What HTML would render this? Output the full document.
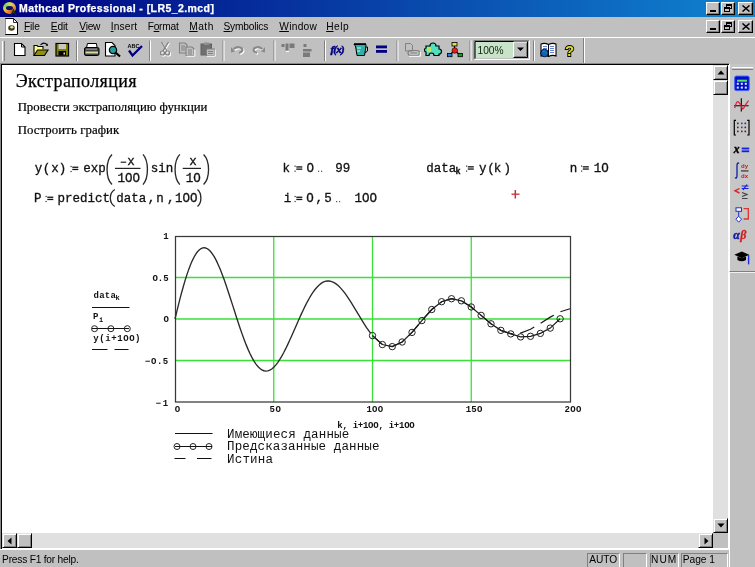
<!DOCTYPE html>
<html><head><meta charset="utf-8">
<style>
*{margin:0;padding:0;box-sizing:border-box}
html,body{width:755px;height:567px;overflow:hidden;background:#c0c0c0;font-family:"Liberation Sans",sans-serif}
.a{position:absolute}
svg.a{will-change:transform}
#title{left:0;top:0;width:755px;height:17px;background:linear-gradient(to right,#000080,#1084d0)}
#title .t{left:20px;top:1px;color:#fff;font-weight:bold;font-size:11px;line-height:14px;white-space:nowrap}
.btn{width:14px;height:13px;background:#c0c0c0;border-top:1px solid #fff;border-left:1px solid #fff;border-right:1px solid #000;border-bottom:1px solid #000;box-shadow:inset -1px -1px 0 #808080}
#menu{left:0;top:17px;width:755px;height:21px;background:#c0c0c0;border-bottom:1px solid #fff}
.mi{top:3px;font-size:11px;line-height:13px;color:#000;white-space:nowrap}
.mi u{text-decoration:none;border-bottom:1px solid #000}
#tb{left:0;top:38px;width:755px;height:26px;background:#c0c0c0}
.sep{top:3px;width:2px;height:21px;border-left:1px solid #808080;border-right:1px solid #fff}
#doc{left:0;top:63px;width:729px;height:486px;background:#fff;border-top:1px solid #8a8a8a;border-left:1px solid #8a8a8a;box-shadow:inset 1px 1px 0 #000}
.serif{font-family:"Liberation Serif",serif;color:#000;white-space:nowrap}
.m{font-family:"Liberation Mono",monospace;font-size:12.6px;color:#000;white-space:nowrap;line-height:14px}
.s{font-family:"Liberation Sans",sans-serif}
.pl{font-family:"Liberation Mono",monospace;font-weight:bold;font-size:8.8px;color:#000;white-space:nowrap;line-height:10px}
.lg{font-family:"Liberation Mono",monospace;font-size:12.4px;color:#000;white-space:nowrap;line-height:12px}
#vs{left:713px;top:65px;width:15px;height:468px;background:#e0e0e0}
#hs{left:2px;top:533px;width:711px;height:15px;background:#e0e0e0}
.sb{width:15px;height:15px;background:#c0c0c0;border-top:1px solid #e0e0e0;border-left:1px solid #e0e0e0;border-right:1px solid #000;border-bottom:1px solid #000;box-shadow:inset 1px 1px 0 #fff,inset -1px -1px 0 #808080}
#rt{left:729px;top:64px;width:26px;height:208px;background:#c6c6c6;border-left:1px solid #fff;border-bottom:1px solid #808080;box-shadow:0 1px 0 #f0f0f0}
#status{left:0;top:549px;width:729px;height:18px;background:#c0c0c0;border-top:1px solid #fff}
#rcol{left:729px;top:64px;width:26px;height:503px;background:#c0c0c0;border-left:1px solid #fff}
.pn{top:3px;height:15px;border-top:1px solid #808080;border-left:1px solid #808080;border-right:1px solid #fff;font-size:11px;line-height:13px;padding-left:2px;white-space:nowrap}
</style></head><body>
<!-- title bar -->
<div id="title" class="a">
  <div class="a" style="left:3px;top:2px;width:13px;height:12px;border-radius:50%;background:conic-gradient(from 200deg,#f08030,#e0d040,#80d060,#c0e060,#f0c040,#e08030,#d06030,#f08030)"></div>
  <div class="a" style="left:6px;top:5.5px;width:7px;height:4.5px;border-radius:50%;background:#10106a"></div>
  <svg class="a" style="left:0;top:0" width="20" height="17"><path d="M11,15.5 L13.5,10 L16,15.5" stroke="#103010" stroke-width="1.3" fill="none"/></svg>
  <div class="a btn" style="left:706px;top:2px"><div class="a" style="left:3px;top:7px;width:6px;height:2px;background:#000"></div></div>
  <div class="a btn" style="left:721px;top:2px">
    <div class="a" style="left:4px;top:1px;width:6px;height:5px;border:1px solid #000;border-top-width:2px"></div>
    <div class="a" style="left:2px;top:4px;width:6px;height:5px;border:1px solid #000;border-top-width:2px;background:#c0c0c0"></div>
  </div>
  <div class="a btn" style="left:738px;top:2px;width:15px"><svg class="a" style="left:3px;top:2px" width="8" height="7" viewBox="0 0 8 7"><path d="M0.5,0.5 L7.5,6.5 M7.5,0.5 L0.5,6.5" stroke="#000" stroke-width="1.5"/></svg></div>
</div>
<!-- menu bar -->
<div id="menu" class="a">
  <svg class="a" style="left:4px;top:1px" width="14" height="17" viewBox="0 0 14 17">
    <path d="M1.5,0.5 H9.5 L13.5,4.5 V16.5 H1.5 Z" fill="#fff" stroke="#000"/>
    <path d="M1.5,1 V16" stroke="#909090"/>
    <path d="M9.5,0.5 V4.5 H13.5" fill="none" stroke="#000" stroke-width="0.8"/>
    <ellipse cx="7.5" cy="10" rx="3.3" ry="2.8" fill="#403818"/>
    <ellipse cx="7.8" cy="9.3" rx="1.6" ry="1.2" fill="#e8e0a0"/>
  </svg>
  <div class="a btn" style="left:706px;top:3px"><div class="a" style="left:3px;top:7px;width:6px;height:2px;background:#000"></div></div>
  <div class="a btn" style="left:721px;top:3px">
    <div class="a" style="left:4px;top:1px;width:6px;height:5px;border:1px solid #000;border-top-width:2px"></div>
    <div class="a" style="left:2px;top:4px;width:6px;height:5px;border:1px solid #000;border-top-width:2px;background:#c0c0c0"></div>
  </div>
  <div class="a btn" style="left:738px;top:3px;width:15px"><svg class="a" style="left:3px;top:2px" width="8" height="7" viewBox="0 0 8 7"><path d="M0.5,0.5 L7.5,6.5 M7.5,0.5 L0.5,6.5" stroke="#000" stroke-width="1.5"/></svg></div>
</div>
<!-- toolbar -->
<div id="tb" class="a">
  <div class="a" style="left:2px;top:3px;width:3px;height:20px;border-left:1px solid #fff;border-right:1px solid #808080"></div>
  <div class="a" style="left:583px;top:0px;width:2px;height:26px;border-left:1px solid #808080;border-right:1px solid #fff"></div>
</div>
<!-- toolbar icons -->
<svg class="a" style="left:0;top:0" width="755" height="567" viewBox="0 0 755 567">
<!-- new -->
<path d="M14.5,43.5 H21.5 L25,47 V55.5 H14.5 Z" fill="#fff" stroke="#000" stroke-width="1.1"/>
<path d="M21.5,43.5 V47 H25" fill="none" stroke="#000" stroke-width="1"/>
<!-- open -->
<path d="M34,55.5 V45.5 H37 L38,46.5 H43 V49" fill="#ffff90" stroke="#000" stroke-width="1.1"/>
<path d="M34,55.5 L37.5,50 H48 L44.5,55.5 Z" fill="#909010" stroke="#000" stroke-width="1.1"/>
<path d="M40.5,45 Q43.5,41.5 47,44.5" fill="none" stroke="#000" stroke-width="1.1"/>
<path d="M45.5,45.5 L48,46 L47.5,43.5 Z" fill="#000"/>
<!-- save -->
<rect x="56" y="43.5" width="12.5" height="12.5" fill="#808000" stroke="#000" stroke-width="1.2"/>
<rect x="58.5" y="44" width="7.5" height="5" fill="#c8c8c0"/>
<rect x="58.5" y="51" width="7.5" height="4.5" fill="#000"/>
<rect x="63.5" y="52.5" width="1.5" height="2" fill="#e0e0c0"/>
<!-- printer -->
<path d="M87.5,43.5 H96.5 L97,47.5 H86.5 Z" fill="#fff" stroke="#000" stroke-width="1"/>
<rect x="84.5" y="47.5" width="14.5" height="8" rx="1.5" fill="#404040" stroke="#000" stroke-width="1"/>
<rect x="85.5" y="51.5" width="12.5" height="2" fill="#d8d8a0"/>
<rect x="86" y="48.5" width="11" height="1.5" fill="#808080"/>
<!-- preview -->
<path d="M105.5,42.5 H112 L115,45.5 V56 H105.5 Z" fill="#fff" stroke="#000" stroke-width="1.1"/>
<circle cx="113" cy="50" r="3.6" fill="#20a0a0" stroke="#000" stroke-width="1.3"/>
<path d="M115.5,52.5 L120,56.5" stroke="#000" stroke-width="2.2"/>
<!-- spell -->
<text x="127.5" y="48" font-family="'Liberation Sans',sans-serif" font-weight="bold" font-size="5.5" fill="#000">ABC</text>
<path d="M129,50.5 L132.5,55.5 L142,46" fill="none" stroke="#000080" stroke-width="2.3"/>
<!-- cut (disabled) -->
<g stroke="#fff" stroke-width="1.2" fill="none" transform="translate(1,1)">
<path d="M161.5,42 L167,51 M168.5,42 L163,51"/><circle cx="162.5" cy="53" r="2"/><circle cx="167.5" cy="53" r="2"/></g>
<g stroke="#808080" stroke-width="1.2" fill="none">
<path d="M161.5,42 L167,51 M168.5,42 L163,51"/><circle cx="162.5" cy="53" r="2"/><circle cx="167.5" cy="53" r="2"/></g>
<!-- copy (disabled) -->
<g fill="#c0c0c0" stroke="#808080" stroke-width="1.1">
<path d="M179.5,43 H185 L187,45 V53 H179.5 Z" /><path d="M186,47 H192 L194,49 V55.5 H186 Z"/></g>
<g stroke="#808080" stroke-width="1"><path d="M181,46 H185 M181,48 H185 M181,50 H185 M188,50 H192 M188,52 H192 M188,54 H192"/></g>
<path d="M194.8,49.5 V56.2 H186.5" fill="none" stroke="#fff" stroke-width="1"/>
<!-- paste (disabled) -->
<rect x="201" y="44" width="10.5" height="11" fill="#707070" stroke="#606060"/>
<rect x="204" y="42.5" width="5" height="2.5" fill="#909090"/>
<rect x="206.5" y="49" width="8" height="6.5" fill="#c0c0c0" stroke="#808080"/>
<path d="M208,51.5 H213 M208,53.5 H213" stroke="#808080"/>
<path d="M215.2,49.5 V56.2 H207" fill="none" stroke="#fff" stroke-width="1"/>
<!-- undo/redo (disabled) -->
<g fill="none" stroke-width="2.2">
<path d="M233.5,49 Q238,45.5 242,48.5 Q243.5,51.5 239,53" stroke="#fff" transform="translate(1,1)"/>
<path d="M233.5,49 Q238,45.5 242,48.5 Q243.5,51.5 239,53" stroke="#8a8a8a"/>
<path d="M262.5,49 Q258,45.5 254,48.5 Q252.5,51.5 257,53" stroke="#fff" transform="translate(1,1)"/>
<path d="M262.5,49 Q258,45.5 254,48.5 Q252.5,51.5 257,53" stroke="#8a8a8a"/>
</g>
<path d="M231,47 L235,51.5 L231,52.5 Z" fill="#8a8a8a"/>
<path d="M265,47 L261,51.5 L265,52.5 Z" fill="#8a8a8a"/>
<!-- align across -->
<g fill="#7a7a7a"><rect x="281.5" y="44" width="3" height="3"/><rect x="285.5" y="43.5" width="3" height="7"/><rect x="289.5" y="43.5" width="5" height="4.5"/></g>
<path d="M286,51.5 H289" stroke="#fff"/>
<!-- align down -->
<g fill="#7a7a7a"><rect x="303.5" y="44" width="3" height="3"/><rect x="303" y="49" width="8.5" height="2.5"/><rect x="303" y="52.5" width="7" height="4.5"/></g>
<!-- f(x) -->
<text x="330.5" y="52.5" font-family="'Liberation Serif',serif" font-style="italic" font-weight="bold" font-size="11" fill="#000080" stroke="#000080" stroke-width="0.5" letter-spacing="-0.8">f(x)</text>
<!-- cup -->
<path d="M354,44.5 H366 V46 L364.5,55.5 H357 L355.5,46 Z" fill="#30b0a8" stroke="#000" stroke-width="1"/>
<path d="M354,44 H366" stroke="#000" stroke-width="1.6"/>
<path d="M365.5,47 H367.5 V51 L364.8,53" fill="none" stroke="#000" stroke-width="1"/>
<path d="M357,48 H361 M357,51 H360" stroke="#c0fff0" stroke-width="1"/>
<!-- equals -->
<rect x="376" y="45.5" width="11" height="2.8" fill="#000080"/>
<rect x="376" y="50" width="11" height="2.8" fill="#000080"/>
<!-- insert component (disabled) -->
<path d="M405.5,43.5 H410.5 L412.5,45.5 V51 H405.5 Z" fill="none" stroke="#808080"/>
<rect x="408" y="50.5" width="11.5" height="5" rx="2.5" fill="none" stroke="#808080" stroke-width="1.2"/>
<path d="M410.5,53 H417" stroke="#808080"/>
<path d="M420.3,52 V56.3 H409" fill="none" stroke="#fff"/>
<!-- puzzle -->
<path d="M426,46 H430 Q430,43 433,43 Q436,43 436,46 H439 V49 Q441.5,49 441.5,51.5 Q441.5,54 439,54 V55.5 H434 Q434,53 431.5,53 Q429,53 429,55.5 H426 V52 Q424.5,52 424.5,50 Q424.5,48 426,48 Z" fill="#50e0c0" stroke="#000" stroke-width="1.2"/>
<path d="M427,47 H431 V52 H427 Z" fill="#c0e060"/>
<!-- network -->
<path d="M454.5,45 V50.5 L449.5,55 M454.5,50.5 L460,55" fill="none" stroke="#000" stroke-width="1.1"/>
<rect x="452" y="42.5" width="5" height="3.5" fill="#e0e040" stroke="#000" stroke-width="0.8"/>
<circle cx="454.8" cy="50.5" r="2.8" fill="#e02020" stroke="#000" stroke-width="0.6"/>
<rect x="447.5" y="53.5" width="4.5" height="3.2" fill="#2080e0" stroke="#000" stroke-width="0.8"/>
<rect x="458" y="53.5" width="4.5" height="3.2" fill="#10a020" stroke="#000" stroke-width="0.8"/>
<!-- combo -->
<rect x="474" y="40.5" width="55" height="19" fill="#c0c0c0"/>
<path d="M474,59.5 V40.5 H529" fill="none" stroke="#808080"/>
<path d="M475,58.5 V41.5 H528" fill="none" stroke="#000"/>
<path d="M474.5,59.5 H529.5 V40.5" fill="none" stroke="#fff"/>
<rect x="476" y="42" width="37" height="16" fill="#c8e4c8"/>
<text x="477.5" y="54" font-family="'Liberation Sans',sans-serif" font-size="10.2" fill="#102010">100%</text>
<rect x="513.5" y="42" width="14" height="15.5" fill="#c0c0c0"/>
<path d="M513.5,57.5 V42 H527.5" fill="none" stroke="#fff"/>
<path d="M513.5,57.5 H527.5 V42" fill="none" stroke="#000"/>
<path d="M514.5,56.5 H526.5 V43" fill="none" stroke="#808080"/>
<path d="M517,47.5 H524 L520.5,51 Z" fill="#000"/>
<!-- book -->
<path d="M541,44 Q544.5,42.5 548.5,44.5 Q552.5,42.5 556,44 V56 Q552.5,54.5 548.5,56.5 Q544.5,54.5 541,56 Z" fill="#fff" stroke="#000" stroke-width="1.1"/>
<path d="M548.5,44.5 V56.5" stroke="#000"/>
<path d="M543,46.5 H547 M543,48.5 H547 M550,46.5 H554 M550,48.5 H554 M550,50.5 H554 M550,52.5 H554" stroke="#4060c0" stroke-width="0.8"/>
<circle cx="544.5" cy="53" r="3.8" fill="#1060c0" stroke="#000" stroke-width="0.8"/>
<path d="M542,51.5 Q544,50 545,52 Q546,54.5 547.5,53" fill="#20a040"/>
<!-- help -->
<text x="565" y="56" font-family="'Liberation Sans',sans-serif" font-weight="bold" font-size="15" fill="#e0e020" stroke="#000" stroke-width="1.8" paint-order="stroke">?</text>
<!-- seps -->
<path d="M76.5,40.5 V61" stroke="#808080" stroke-width="1"/><path d="M77.5,40.5 V61" stroke="#fff" stroke-width="1"/>
<path d="M149.5,40.5 V61" stroke="#808080" stroke-width="1"/><path d="M150.5,40.5 V61" stroke="#fff" stroke-width="1"/>
<path d="M223.0,40.5 V61" stroke="#808080" stroke-width="1"/><path d="M224.0,40.5 V61" stroke="#fff" stroke-width="1"/>
<path d="M274.0,40.5 V61" stroke="#808080" stroke-width="1"/><path d="M275.0,40.5 V61" stroke="#fff" stroke-width="1"/>
<path d="M324.5,40.5 V61" stroke="#808080" stroke-width="1"/><path d="M325.5,40.5 V61" stroke="#fff" stroke-width="1"/>
<path d="M397.0,40.5 V61" stroke="#808080" stroke-width="1"/><path d="M398.0,40.5 V61" stroke="#fff" stroke-width="1"/>
<path d="M470.0,40.5 V61" stroke="#808080" stroke-width="1"/><path d="M471.0,40.5 V61" stroke="#fff" stroke-width="1"/>
<path d="M533.5,40.5 V61" stroke="#808080" stroke-width="1"/><path d="M534.5,40.5 V61" stroke="#fff" stroke-width="1"/>


</svg>
<!-- document -->
<div id="doc" class="a">
</div>
<!-- math -->
<svg class="a" style="left:0;top:0" width="755" height="567">
<text x="34.70" y="172.20" font-family='"Liberation Mono",monospace' font-weight="normal" font-size="12.5" fill="#111" stroke="#111" stroke-width="0.3" xml:space="preserve">y</text>
<text x="42.71" y="172.20" font-family='"Liberation Mono",monospace' font-weight="normal" font-size="12.5" fill="#111" stroke="#111" stroke-width="0.3" xml:space="preserve">(</text>
<text x="51.13" y="172.20" font-family='"Liberation Mono",monospace' font-weight="normal" font-size="12.5" fill="#111" stroke="#111" stroke-width="0.3" xml:space="preserve">x</text>
<text x="58.65" y="172.20" font-family='"Liberation Mono",monospace' font-weight="normal" font-size="12.5" fill="#111" stroke="#111" stroke-width="0.3" xml:space="preserve">)</text>
<rect x="70.50" y="165.90" width="1.2" height="1.2" fill="#333"/>
<rect x="70.50" y="170.90" width="1.2" height="1.2" fill="#333"/>
<rect x="72.30" y="166.60" width="6" height="1.3" fill="#111"/>
<rect x="72.30" y="168.80" width="6" height="1.3" fill="#111"/>
<text x="83.19" y="172.20" font-family='"Liberation Mono",monospace' font-weight="normal" font-size="12.5" fill="#111" stroke="#111" stroke-width="0.3" xml:space="preserve">exp</text>
<path d="M112.00,154.40 C105.40,161.04 105.40,177.96 112.00,184.60" fill="none" stroke="#2a2a2a" stroke-width="1.35"/>
<rect x="120.7" y="161.6" width="5.5" height="1.2" fill="#222"/>
<text x="127.23" y="164.70" font-family='"Liberation Mono",monospace' font-weight="normal" font-size="12.5" fill="#111" stroke="#111" stroke-width="0.3" xml:space="preserve">x</text>
<rect x="115.00" y="167.80" width="25.50" height="1.2" fill="#222"/>
<text x="117.40" y="181.70" font-family='"Liberation Mono",monospace' font-weight="normal" font-size="12.5" fill="#111" stroke="#111" stroke-width="0.3" xml:space="preserve">1OO</text>
<path d="M143.00,154.40 C148.90,161.04 148.90,177.96 143.00,184.60" fill="none" stroke="#2a2a2a" stroke-width="1.35"/>
<text x="150.68" y="172.20" font-family='"Liberation Mono",monospace' font-weight="normal" font-size="12.5" fill="#111" stroke="#111" stroke-width="0.3" xml:space="preserve">sin</text>
<path d="M179.80,154.40 C173.50,161.04 173.50,177.96 179.80,184.60" fill="none" stroke="#2a2a2a" stroke-width="1.35"/>
<text x="189.23" y="164.70" font-family='"Liberation Mono",monospace' font-weight="normal" font-size="12.5" fill="#111" stroke="#111" stroke-width="0.3" xml:space="preserve">x</text>
<rect x="182.70" y="167.80" width="18.30" height="1.2" fill="#222"/>
<text x="185.70" y="181.70" font-family='"Liberation Mono",monospace' font-weight="normal" font-size="12.5" fill="#111" stroke="#111" stroke-width="0.3" xml:space="preserve">1O</text>
<path d="M203.60,154.40 C210.20,161.04 210.20,177.96 203.60,184.60" fill="none" stroke="#2a2a2a" stroke-width="1.35"/>
<text x="34.01" y="202.20" font-family='"Liberation Mono",monospace' font-weight="normal" font-size="12.5" fill="#111" stroke="#111" stroke-width="0.3" xml:space="preserve">P</text>
<rect x="45.50" y="195.90" width="1.2" height="1.2" fill="#333"/>
<rect x="45.50" y="200.90" width="1.2" height="1.2" fill="#333"/>
<rect x="47.30" y="196.60" width="6" height="1.3" fill="#111"/>
<rect x="47.30" y="198.80" width="6" height="1.3" fill="#111"/>
<text x="57.41" y="202.20" font-family='"Liberation Mono",monospace' font-weight="normal" font-size="12.5" fill="#111" stroke="#111" stroke-width="0.3" xml:space="preserve">predict</text>
<path d="M114.80,189.50 C108.80,193.24 108.80,202.76 114.80,206.50" fill="none" stroke="#2a2a2a" stroke-width="1.35"/>
<text x="116.16" y="202.20" font-family='"Liberation Mono",monospace' font-weight="normal" font-size="12.5" fill="#111" stroke="#111" stroke-width="0.3" xml:space="preserve">data</text>
<text x="147.82" y="202.20" font-family='"Liberation Mono",monospace' font-weight="normal" font-size="12.5" fill="#111" stroke="#111" stroke-width="0.3" xml:space="preserve">,</text>
<text x="156.21" y="202.20" font-family='"Liberation Mono",monospace' font-weight="normal" font-size="12.5" fill="#111" stroke="#111" stroke-width="0.3" xml:space="preserve">n</text>
<text x="167.02" y="202.20" font-family='"Liberation Mono",monospace' font-weight="normal" font-size="12.5" fill="#111" stroke="#111" stroke-width="0.3" xml:space="preserve">,</text>
<text x="175.00" y="202.20" font-family='"Liberation Mono",monospace' font-weight="normal" font-size="12.5" fill="#111" stroke="#111" stroke-width="0.3" xml:space="preserve">1OO</text>
<path d="M197.50,189.50 C202.00,193.24 202.00,202.76 197.50,206.50" fill="none" stroke="#2a2a2a" stroke-width="1.35"/>
<text x="282.56" y="171.90" font-family='"Liberation Mono",monospace' font-weight="normal" font-size="12.5" fill="#111" stroke="#111" stroke-width="0.3" xml:space="preserve">k</text>
<rect x="294.50" y="165.60" width="1.2" height="1.2" fill="#333"/>
<rect x="294.50" y="170.60" width="1.2" height="1.2" fill="#333"/>
<rect x="296.30" y="166.30" width="6" height="1.3" fill="#111"/>
<rect x="296.30" y="168.50" width="6" height="1.3" fill="#111"/>
<text x="306.38" y="171.90" font-family='"Liberation Mono",monospace' font-weight="normal" font-size="12.5" fill="#111" stroke="#111" stroke-width="0.3" xml:space="preserve">O</text>
<rect x="318.00" y="170.70" width="1.2" height="1.2" fill="#555"/>
<rect x="321.00" y="170.70" width="1.2" height="1.2" fill="#555"/>
<text x="335.34" y="171.90" font-family='"Liberation Mono",monospace' font-weight="normal" font-size="12.5" fill="#111" stroke="#111" stroke-width="0.3" xml:space="preserve">99</text>
<text x="283.63" y="202.20" font-family='"Liberation Mono",monospace' font-weight="normal" font-size="12.5" fill="#111" stroke="#111" stroke-width="0.3" xml:space="preserve">i</text>
<rect x="294.50" y="195.90" width="1.2" height="1.2" fill="#333"/>
<rect x="294.50" y="200.90" width="1.2" height="1.2" fill="#333"/>
<rect x="296.30" y="196.60" width="6" height="1.3" fill="#111"/>
<rect x="296.30" y="198.80" width="6" height="1.3" fill="#111"/>
<text x="306.18" y="202.20" font-family='"Liberation Mono",monospace' font-weight="normal" font-size="12.5" fill="#111" stroke="#111" stroke-width="0.3" xml:space="preserve">O</text>
<text x="315.42" y="202.20" font-family='"Liberation Mono",monospace' font-weight="normal" font-size="12.5" fill="#111" stroke="#111" stroke-width="0.3" xml:space="preserve">,</text>
<text x="324.22" y="202.20" font-family='"Liberation Mono",monospace' font-weight="normal" font-size="12.5" fill="#111" stroke="#111" stroke-width="0.3" xml:space="preserve">5</text>
<rect x="336.00" y="201.00" width="1.2" height="1.2" fill="#555"/>
<rect x="339.00" y="201.00" width="1.2" height="1.2" fill="#555"/>
<text x="354.40" y="202.20" font-family='"Liberation Mono",monospace' font-weight="normal" font-size="12.5" fill="#111" stroke="#111" stroke-width="0.3" xml:space="preserve">1OO</text>
<text x="426.16" y="171.80" font-family='"Liberation Mono",monospace' font-weight="normal" font-size="12.5" fill="#111" stroke="#111" stroke-width="0.3" xml:space="preserve">data</text>
<text x="455.58" y="174.10" font-family='"Liberation Mono",monospace' font-weight="bold" font-size="8.5" fill="#111" stroke="#111" stroke-width="0.3" xml:space="preserve">k</text>
<rect x="466.00" y="165.50" width="1.2" height="1.2" fill="#333"/>
<rect x="466.00" y="170.50" width="1.2" height="1.2" fill="#333"/>
<rect x="467.80" y="166.20" width="6" height="1.3" fill="#111"/>
<rect x="467.80" y="168.40" width="6" height="1.3" fill="#111"/>
<text x="479.00" y="171.80" font-family='"Liberation Mono",monospace' font-weight="normal" font-size="12.5" fill="#111" stroke="#111" stroke-width="0.3" xml:space="preserve">y</text>
<text x="487.31" y="171.80" font-family='"Liberation Mono",monospace' font-weight="normal" font-size="12.5" fill="#111" stroke="#111" stroke-width="0.3" xml:space="preserve">(</text>
<text x="493.86" y="171.80" font-family='"Liberation Mono",monospace' font-weight="normal" font-size="12.5" fill="#111" stroke="#111" stroke-width="0.3" xml:space="preserve">k</text>
<text x="503.55" y="171.80" font-family='"Liberation Mono",monospace' font-weight="normal" font-size="12.5" fill="#111" stroke="#111" stroke-width="0.3" xml:space="preserve">)</text>
<text x="569.71" y="171.80" font-family='"Liberation Mono",monospace' font-weight="normal" font-size="12.5" fill="#111" stroke="#111" stroke-width="0.3" xml:space="preserve">n</text>
<rect x="581.00" y="165.50" width="1.2" height="1.2" fill="#333"/>
<rect x="581.00" y="170.50" width="1.2" height="1.2" fill="#333"/>
<rect x="582.80" y="166.20" width="6" height="1.3" fill="#111"/>
<rect x="582.80" y="168.40" width="6" height="1.3" fill="#111"/>
<text x="593.80" y="171.80" font-family='"Liberation Mono",monospace' font-weight="normal" font-size="12.5" fill="#111" stroke="#111" stroke-width="0.3" xml:space="preserve">1O</text>
</svg>
<svg class="a" style="left:0;top:0" width="755" height="567"><path d="M511.5,194.2 H519.5" stroke="#d84848" stroke-width="1.5"/><path d="M515.3,190 V198.5" stroke="#b83848" stroke-width="1.5"/></svg>
<!-- plot -->
<svg class="a" style="left:0;top:0" width="755" height="567" viewBox="0 0 755 567">
  <g stroke="#38e038" stroke-width="1.3" fill="none">
    <line x1="175" y1="277.5" x2="570" y2="277.5"/>
    <line x1="175" y1="319" x2="570" y2="319"/>
    <line x1="175" y1="360.5" x2="570" y2="360.5"/>
    <line x1="273.75" y1="236" x2="273.75" y2="402"/>
    <line x1="372.5" y1="236" x2="372.5" y2="402"/>
    <line x1="471.25" y1="236" x2="471.25" y2="402"/>
  </g>
  <rect x="175.5" y="236.5" width="395" height="165.5" fill="none" stroke="#383838" stroke-width="1.25"/>
  <polyline points="175.00,319.00 176.97,310.80 178.95,302.84 180.93,295.20 182.90,287.95 184.88,281.15 186.85,274.86 188.82,269.14 190.80,264.04 192.78,259.58 194.75,255.80 196.72,252.73 198.70,250.39 200.68,248.77 202.65,247.89 204.62,247.74 206.60,248.30 208.57,249.56 210.55,251.49 212.53,254.05 214.50,257.21 216.47,260.92 218.45,265.15 220.43,269.82 222.40,274.90 224.38,280.31 226.35,286.01 228.32,291.92 230.30,297.99 232.28,304.14 234.25,310.32 236.22,316.47 238.20,322.52 240.18,328.41 242.15,334.10 244.12,339.52 246.10,344.63 248.07,349.38 250.05,353.73 252.03,357.65 254.00,361.11 255.97,364.07 257.95,366.53 259.93,368.47 261.90,369.87 263.88,370.73 265.85,371.07 267.82,370.87 269.80,370.16 271.77,368.96 273.75,367.27 275.73,365.14 277.70,362.59 279.68,359.66 281.65,356.38 283.62,352.79 285.60,348.93 287.57,344.85 289.55,340.59 291.52,336.20 293.50,331.73 295.48,327.22 297.45,322.71 299.43,318.26 301.40,313.90 303.38,309.68 305.35,305.64 307.32,301.81 309.30,298.22 311.27,294.92 313.25,291.92 315.23,289.25 317.20,286.94 319.18,284.98 321.15,283.41 323.12,282.22 325.10,281.43 327.07,281.02 329.05,281.01 331.02,281.37 333.00,282.10 334.98,283.19 336.95,284.61 338.93,286.35 340.90,288.38 342.88,290.67 344.85,293.21 346.82,295.95 348.80,298.86 350.77,301.92 352.75,305.09 354.73,308.34 356.70,311.63 358.68,314.92 360.65,318.20 362.62,321.41 364.60,324.54 366.57,327.55 368.55,330.42 370.52,333.11" fill="none" stroke="#2a2a2a" stroke-width="1.35"/>
  <polyline points="372.50,335.61 382.38,344.55 392.25,346.63 402.12,342.01 412.00,332.41 421.88,320.58 431.75,309.50 441.62,301.71 451.50,298.72 461.38,300.80 471.25,306.96 481.12,315.36 491.00,323.82 500.88,330.35 510.75,333.58 520.62,333.07 530.50,329.30 540.38,323.47 550.25,317.14 560.12,311.85 570.00,308.75" fill="none" stroke="#1a1a1a" stroke-width="1.2" stroke-dasharray="15.5 7.4" stroke-dashoffset="2.7"/>
  <polyline points="372.50,335.61 382.38,344.55 392.25,346.63 402.12,342.01 412.00,332.41 421.88,320.58 431.75,309.50 441.62,301.71 451.50,298.72 461.38,300.80 471.25,306.96 481.12,315.36 491.00,323.82 500.88,330.35 510.75,333.90 520.62,336.90 530.50,336.30 540.38,333.40 550.25,328.10 560.12,318.80" fill="none" stroke="#1a1a1a" stroke-width="1.2"/>
  <g fill="none" stroke="#222" stroke-width="1"><circle cx="372.50" cy="335.61" r="3.2"/><circle cx="382.38" cy="344.55" r="3.2"/><circle cx="392.25" cy="346.63" r="3.2"/><circle cx="402.12" cy="342.01" r="3.2"/><circle cx="412.00" cy="332.41" r="3.2"/><circle cx="421.88" cy="320.58" r="3.2"/><circle cx="431.75" cy="309.50" r="3.2"/><circle cx="441.62" cy="301.71" r="3.2"/><circle cx="451.50" cy="298.72" r="3.2"/><circle cx="461.38" cy="300.80" r="3.2"/><circle cx="471.25" cy="306.96" r="3.2"/><circle cx="481.12" cy="315.36" r="3.2"/><circle cx="491.00" cy="323.82" r="3.2"/><circle cx="500.88" cy="330.35" r="3.2"/><circle cx="510.75" cy="333.90" r="3.2"/><circle cx="520.62" cy="336.90" r="3.2"/><circle cx="530.50" cy="336.30" r="3.2"/><circle cx="540.38" cy="333.40" r="3.2"/><circle cx="550.25" cy="328.10" r="3.2"/><circle cx="560.12" cy="318.80" r="3.2"/></g>
  <!-- legend left -->
  <line x1="92" y1="307.5" x2="129.5" y2="307.5" stroke="#111" stroke-width="1.1"/>
  <line x1="92" y1="328.5" x2="129" y2="328.5" stroke="#111" stroke-width="1"/>
  <g fill="none" stroke="#222" stroke-width="1"><circle cx="94.5" cy="328.7" r="3"/><circle cx="110.9" cy="328.7" r="3"/><circle cx="127.3" cy="328.7" r="3"/></g>
  <path d="M92,349.5 H107.5 M114.5,349.5 H128.5" stroke="#111" stroke-width="1.1"/>
  <!-- legend bottom -->
  <line x1="175" y1="433.5" x2="212.5" y2="433.5" stroke="#111" stroke-width="1.1"/>
  <line x1="175" y1="446.5" x2="212" y2="446.5" stroke="#111" stroke-width="1"/>
  <g fill="none" stroke="#222" stroke-width="1"><circle cx="177" cy="446.5" r="3"/><circle cx="193" cy="446.5" r="3"/><circle cx="209" cy="446.5" r="3"/></g>
  <path d="M174.5,458.5 H185.5 M197,458.5 H211.5" stroke="#111" stroke-width="1.1"/>
</svg>
<!-- scrollbars -->
<div id="vs" class="a">
  <div class="a sb" style="left:0;top:0"><svg class="a" style="left:3px;top:4px" width="8" height="5"><path d="M4,0.5 L7.5,4.5 H0.5 Z" fill="#000"/></svg></div>
  <div class="a sb" style="left:0;top:15px"></div>
  <div class="a sb" style="left:0;top:453px"><svg class="a" style="left:3px;top:4px" width="8" height="5"><path d="M4,4.5 L7.5,0.5 H0.5 Z" fill="#000"/></svg></div>
</div>
<div id="hs" class="a">
  <div class="a sb" style="left:0;top:0"><svg class="a" style="left:4px;top:3px" width="5" height="8"><path d="M0.5,4 L4.5,0.5 V7.5 Z" fill="#000"/></svg></div>
  <div class="a sb" style="left:15px;top:0"></div>
  <div class="a sb" style="left:696px;top:0"><svg class="a" style="left:5px;top:3px" width="5" height="8"><path d="M4.5,4 L0.5,0.5 V7.5 Z" fill="#000"/></svg></div>
</div>
<div class="a" style="left:713px;top:533px;width:15px;height:15px;background:#c0c0c0"></div>
<!-- right toolbar -->
<div id="rcol" class="a"></div>
<div id="rt" class="a">
  <div class="a" style="left:2px;top:3px;width:21px;height:3px;border-top:1px solid #fff;border-bottom:1px solid #808080"></div>
</div>
<svg class="a" style="left:0;top:0" width="755" height="567" viewBox="0 0 755 567">
<!-- calculator -->
<rect x="734.7" y="76.1" width="14.5" height="14.5" rx="1.5" fill="#0010c8" stroke="#4060ff" stroke-width="1"/>
<rect x="737" y="79.7" width="10" height="2" fill="#60e060"/>
<g fill="#e0e8ff"><rect x="736.8" y="82.8" width="2" height="2"/><rect x="740.8" y="82.8" width="2" height="2"/><rect x="744.8" y="82.8" width="2" height="2"/>
<rect x="736.8" y="86.6" width="2" height="2"/><rect x="740.8" y="86.6" width="2" height="2"/><rect x="744.8" y="86.6" width="2" height="2"/></g>
<!-- graph -->
<path d="M741.3,98.2 V111.6 M734,105.8 H748.6" stroke="#000" stroke-width="1.1"/>
<path d="M734.7,108.1 Q736.5,100.5 738.2,101.7 Q740,103 741.5,106.5 Q742.5,110 743.5,108.5 Q746,103.5 748.6,100.6" fill="none" stroke="#e02030" stroke-width="1.2"/>
<!-- matrix -->
<path d="M736,120.4 H734.3 V135 H736 M747.2,120.4 H749 V135 H747.2" fill="none" stroke="#000" stroke-width="1.2"/>
<g fill="#402060"><rect x="737" y="122.6" width="1.6" height="1.6"/><rect x="741" y="122.6" width="1.6" height="1.6" fill="#2040c0"/><rect x="744.5" y="122.6" width="1.6" height="1.6" fill="#602020"/>
<rect x="737" y="126.6" width="1.6" height="1.6" fill="#602020"/><rect x="741" y="126.6" width="1.6" height="1.6" fill="#2040c0"/><rect x="744.5" y="126.6" width="1.6" height="1.6"/>
<rect x="737" y="130.6" width="1.6" height="1.6"/><rect x="741" y="130.6" width="1.6" height="1.6" fill="#602020"/><rect x="744.5" y="130.6" width="1.6" height="1.6" fill="#402020"/></g>
<!-- x= -->
<text x="733.8" y="152.6" font-family="'Liberation Serif',serif" font-style="italic" font-weight="bold" font-size="11.5" fill="#000" stroke="#000" stroke-width="0.4">x</text>
<rect x="741.7" y="147.6" width="7.5" height="1.8" fill="#1020e0"/><rect x="741.7" y="150.4" width="7.5" height="1.8" fill="#1020e0"/>
<!-- integral -->
<path d="M739,163.5 Q737.5,162 737,165 V176 Q736.7,179 735,177.5" fill="none" stroke="#1020a0" stroke-width="1.3"/>
<text x="741" y="168.3" font-family="'Liberation Sans',sans-serif" font-weight="bold" font-size="6" fill="#c02020">dy</text>
<rect x="741" y="170.5" width="7.5" height="0.9" fill="#000"/>
<text x="741" y="177.8" font-family="'Liberation Sans',sans-serif" font-weight="bold" font-size="6" fill="#c02020">dx</text>
<!-- boolean -->
<path d="M739.5,188.5 L735,190.8 L739.5,193" fill="none" stroke="#e02020" stroke-width="1.4"/>
<path d="M741.7,186 H748.5 M741.7,188.5 H748.5 M747,184.5 L743,190" fill="none" stroke="#1020e0" stroke-width="1.2"/>
<path d="M742,192.5 L747,194.5 L742,196.5 M742,198.5 H747.5" fill="none" stroke="#404040" stroke-width="1.2"/>
<!-- programming -->
<rect x="736" y="207.8" width="5.5" height="3.5" fill="#fff" stroke="#2030c0" stroke-width="1"/>
<path d="M738.7,211.3 V216" stroke="#2030c0" stroke-width="1"/>
<path d="M738.7,216.2 L741.5,219.2 L738.7,222.2 L735.9,219.2 Z" fill="#fff" stroke="#2030c0" stroke-width="1"/>
<path d="M743.6,208.7 H748.3 V219 H743.6" fill="none" stroke="#e03030" stroke-width="1.3"/>
<!-- alpha beta -->
<text x="733.2" y="238.6" font-family="'Liberation Serif',serif" font-style="italic" font-weight="bold" font-size="12" fill="#1020a0" stroke="#1020a0" stroke-width="0.4">α</text>
<text x="740.3" y="239" font-family="'Liberation Serif',serif" font-style="italic" font-weight="bold" font-size="12" fill="#d02020" stroke="#d02020" stroke-width="0.3">β</text>
<!-- mortarboard -->
<path d="M734.3,254.8 L741.8,251.4 L749.2,254.8 L741.8,258.2 Z" fill="#000"/>
<path d="M737.4,256.5 V260 Q741.8,262.5 746,260 V256.5 L741.8,258.2 Z" fill="#000"/>
<path d="M748.6,255 V264.4" stroke="#2030e0" stroke-width="1.4"/>

</svg>
<!-- status -->
<div id="status" class="a">
  <div class="a pn" style="left:587px;width:33px"></div>
  <div class="a pn" style="left:623px;width:24px"></div>
  <div class="a pn" style="left:650px;width:29px"></div>
  <div class="a pn" style="left:681px;width:47px"></div>
</div>
<svg class="a" style="left:0;top:0" width="755" height="567" viewBox="0 0 755 567">
<text x="19.00" y="12.00" font-family='"Liberation Sans",sans-serif' font-weight="bold" font-size="10.5" letter-spacing="0.425" fill="#fff" xml:space="preserve" stroke="#fff" stroke-width="0.25">Mathcad Professional - [LR5_2.mcd]</text>
<text x="23.96" y="29.90" font-family='"Liberation Sans",sans-serif' font-weight="normal" font-size="10.2" letter-spacing="-0.182" fill="#000" xml:space="preserve" >File</text>
<rect x="23.96" y="31" width="6.23" height="1" fill="#000"/>
<text x="50.86" y="29.90" font-family='"Liberation Sans",sans-serif' font-weight="normal" font-size="10.2" letter-spacing="-0.188" fill="#000" xml:space="preserve" >Edit</text>
<rect x="50.86" y="31" width="6.80" height="1" fill="#000"/>
<text x="79.36" y="29.90" font-family='"Liberation Sans",sans-serif' font-weight="normal" font-size="10.2" letter-spacing="-0.296" fill="#000" xml:space="preserve" >View</text>
<rect x="79.36" y="31" width="6.80" height="1" fill="#000"/>
<text x="110.76" y="29.90" font-family='"Liberation Sans",sans-serif' font-weight="normal" font-size="10.2" letter-spacing="0.161" fill="#000" xml:space="preserve" >Insert</text>
<rect x="110.76" y="31" width="2.83" height="1" fill="#000"/>
<text x="147.66" y="29.90" font-family='"Liberation Sans",sans-serif' font-weight="normal" font-size="10.2" letter-spacing="-0.238" fill="#000" xml:space="preserve" >Format</text>
<rect x="153.66" y="31" width="5.67" height="1" fill="#000"/>
<text x="189.16" y="29.90" font-family='"Liberation Sans",sans-serif' font-weight="normal" font-size="10.2" letter-spacing="0.508" fill="#000" xml:space="preserve" >Math</text>
<rect x="189.16" y="31" width="8.50" height="1" fill="#000"/>
<text x="223.54" y="29.90" font-family='"Liberation Sans",sans-serif' font-weight="normal" font-size="10.2" letter-spacing="-0.206" fill="#000" xml:space="preserve" >Symbolics</text>
<rect x="223.54" y="31" width="6.80" height="1" fill="#000"/>
<text x="279.26" y="29.90" font-family='"Liberation Sans",sans-serif' font-weight="normal" font-size="10.2" letter-spacing="0.288" fill="#000" xml:space="preserve" >Window</text>
<rect x="279.26" y="31" width="9.63" height="1" fill="#000"/>
<text x="326.16" y="29.90" font-family='"Liberation Sans",sans-serif' font-weight="normal" font-size="10.2" letter-spacing="0.529" fill="#000" xml:space="preserve" >Help</text>
<rect x="326.16" y="31" width="7.37" height="1" fill="#000"/>
<text x="15.81" y="87.30" font-family='"Liberation Serif",serif' font-weight="normal" font-size="18" letter-spacing="0.376" fill="#000" xml:space="preserve" stroke="#000" stroke-width="0.25">Экстраполяция</text>
<text x="17.63" y="110.70" font-family='"Liberation Serif",serif' font-weight="normal" font-size="12.8" letter-spacing="0.000" fill="#000" xml:space="preserve" stroke="#000" stroke-width="0.2">Провести экстраполяцию функции</text>
<text x="17.63" y="133.60" font-family='"Liberation Serif",serif' font-weight="normal" font-size="12.8" letter-spacing="0.084" fill="#000" xml:space="preserve" stroke="#000" stroke-width="0.2">Построить график</text>
<text x="163.19" y="238.70" font-family='"Liberation Mono",monospace' font-weight="bold" font-size="9" letter-spacing="0.788" fill="#111" xml:space="preserve" >1</text>
<text x="152.38" y="280.90" font-family='"Liberation Mono",monospace' font-weight="bold" font-size="9" letter-spacing="0.040" fill="#111" xml:space="preserve" >O.5</text>
<text x="163.58" y="322.20" font-family='"Liberation Mono",monospace' font-weight="bold" font-size="9" letter-spacing="-0.268" fill="#111" xml:space="preserve" >O</text>
<text x="144.96" y="364.00" font-family='"Liberation Mono",monospace' font-weight="bold" font-size="9" letter-spacing="0.569" fill="#111" xml:space="preserve" >−O.5</text>
<text x="155.76" y="405.50" font-family='"Liberation Mono",monospace' font-weight="bold" font-size="9" letter-spacing="1.624" fill="#111" xml:space="preserve" >−1</text>
<text x="174.68" y="411.70" font-family='"Liberation Mono",monospace' font-weight="bold" font-size="9" letter-spacing="0.532" fill="#111" xml:space="preserve" >O</text>
<text x="269.54" y="411.70" font-family='"Liberation Mono",monospace' font-weight="bold" font-size="9" letter-spacing="0.472" fill="#111" xml:space="preserve" >5O</text>
<text x="366.39" y="411.70" font-family='"Liberation Mono",monospace' font-weight="bold" font-size="9" letter-spacing="0.260" fill="#111" xml:space="preserve" >1OO</text>
<text x="465.69" y="411.70" font-family='"Liberation Mono",monospace' font-weight="bold" font-size="9" letter-spacing="0.260" fill="#111" xml:space="preserve" >15O</text>
<text x="564.46" y="411.70" font-family='"Liberation Mono",monospace' font-weight="bold" font-size="9" letter-spacing="0.327" fill="#111" xml:space="preserve" >2OO</text>
<text x="337.24" y="428.00" font-family='"Liberation Mono",monospace' font-weight="bold" font-size="9" letter-spacing="-0.253" fill="#111" xml:space="preserve" >k, i+1OO, i+1OO</text>
<text x="93.57" y="297.70" font-family='"Liberation Mono",monospace' font-weight="bold" font-size="9" letter-spacing="0.249" fill="#111" xml:space="preserve" >data</text>
<text x="115.61" y="299.80" font-family='"Liberation Mono",monospace' font-weight="bold" font-size="7" letter-spacing="0.889" fill="#111" xml:space="preserve" >k</text>
<text x="92.90" y="319.40" font-family='"Liberation Mono",monospace' font-weight="bold" font-size="9" letter-spacing="-0.221" fill="#111" xml:space="preserve" >P</text>
<text x="98.90" y="321.50" font-family='"Liberation Mono",monospace' font-weight="bold" font-size="7" letter-spacing="-0.317" fill="#111" xml:space="preserve" >i</text>
<text x="93.33" y="340.60" font-family='"Liberation Mono",monospace' font-weight="bold" font-size="9" letter-spacing="0.567" fill="#111" xml:space="preserve" >y(i+1OO)</text>
<text x="227.01" y="438.00" font-family='"Liberation Mono",monospace' font-weight="normal" font-size="12.5" letter-spacing="0.146" fill="#111" xml:space="preserve" >Имеющиеся данные</text>
<text x="227.01" y="450.30" font-family='"Liberation Mono",monospace' font-weight="normal" font-size="12.5" letter-spacing="0.126" fill="#111" xml:space="preserve" >Предсказанные данные</text>
<text x="227.01" y="462.50" font-family='"Liberation Mono",monospace' font-weight="normal" font-size="12.5" letter-spacing="0.201" fill="#111" xml:space="preserve" >Истина</text>
<text x="2.06" y="563.20" font-family='"Liberation Sans",sans-serif' font-weight="normal" font-size="10.2" letter-spacing="-0.214" fill="#000" xml:space="preserve" >Press F1 for help.</text>
<text x="589.18" y="562.80" font-family='"Liberation Sans",sans-serif' font-weight="normal" font-size="10.2" letter-spacing="-0.009" fill="#000" xml:space="preserve" >AUTO</text>
<text x="651.06" y="562.80" font-family='"Liberation Sans",sans-serif' font-weight="normal" font-size="10.2" letter-spacing="1.022" fill="#000" xml:space="preserve" >NUM</text>
<text x="682.86" y="562.80" font-family='"Liberation Sans",sans-serif' font-weight="normal" font-size="10.2" letter-spacing="-0.039" fill="#000" xml:space="preserve" >Page 1</text>
</svg>
</body></html>
